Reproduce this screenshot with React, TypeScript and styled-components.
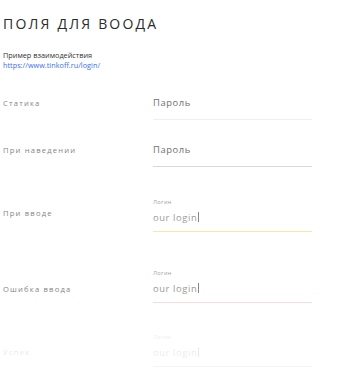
import React from "react";
import styled, { createGlobalStyle } from "styled-components";

const Global = createGlobalStyle`
  html, body { margin: 0; padding: 0; background: #fff; }
  body { font-family: "Open Sans", "Noto Sans", sans-serif; }
`;

const Page = styled.div`
  width: 342px;
  height: 392px;
  overflow: hidden;
  padding: 16px 0 0 3px;
  box-sizing: border-box;
`;

const Title = styled.h1`
  margin: 0;
  font-size: 14px;
  line-height: 16px;
  font-weight: 400;
  letter-spacing: 2.2px;
  color: #2b2b2b;
`;

const Caption = styled.div`
  margin-top: 19px;
  font-size: 7.3px;
  line-height: 9px;
  color: #333;
`;

const Link = styled.a`
  display: block;
  margin-top: 1px;
  font-size: 7.3px;
  line-height: 9px;
  color: #3a6ff2;
  text-decoration: none;
`;

const Rows = styled.div`
  display: flex;
  flex-direction: column;
`;

const Row = styled.div<{ $top: number; $faded?: boolean }>`
  display: grid;
  grid-template-columns: 150px 159px;
  align-items: end;
  margin-top: ${(p) => p.$top}px;
  opacity: ${(p) => (p.$faded ? 0.18 : 1)};
`;

const StateLabel = styled.div<{ $shift: number }>`
  font-size: 7.6px;
  line-height: 14px;
  letter-spacing: 1.2px;
  color: #858585;
  padding-bottom: ${(p) => p.$shift}px;
`;

const Field = styled.div<{ $line: string; $filled: boolean }>`
  display: flex;
  flex-direction: column;
  border-bottom: 1px solid ${(p) => p.$line};
  padding-bottom: ${(p) => (p.$filled ? 6 : 9)}px;
`;

const FloatLabel = styled.div`
  font-size: 5.6px;
  line-height: 8px;
  letter-spacing: 0.4px;
  color: #a0a0a0;
  margin-bottom: 5px;
`;

const Value = styled.div<{ $placeholder?: boolean }>`
  font-size: 9.4px;
  line-height: 14px;
  letter-spacing: 0.6px;
  color: ${(p) => (p.$placeholder ? "#707070" : "#9a9a9a")};
`;

const Caret = styled.span`
  display: inline-block;
  width: 1px;
  height: 10px;
  margin-left: 1px;
  vertical-align: -1px;
  background: #888;
`;

type RowData = {
  name: string;
  top: number;
  line: string;
  filled: boolean;
  shift: number;
  faded?: boolean;
};

const rows: RowData[] = [
  { name: "Статика", top: 26, line: "#f0f0f0", filled: false, shift: 10 },
  { name: "При наведении", top: 23, line: "#d9d9d9", filled: false, shift: 10 },
  { name: "При вводе", top: 31, line: "#fbe7a6", filled: true, shift: 12 },
  { name: "Ошибка ввода", top: 37, line: "#fadcdc", filled: true, shift: 7 },
  { name: "Успех", top: 30, line: "#cccccc", filled: true, shift: 8, faded: true },
];

export default function App() {
  return (
    <>
      <Global />
      <Page>
        <Title>ПОЛЯ ДЛЯ ВООДА</Title>
        <Caption>Пример взаимодействия</Caption>
        <Link href="#">https://www.tinkoff.ru/login/</Link>
        <Rows>
          {rows.map((r) => (
            <Row key={r.name} $top={r.top} $faded={r.faded}>
              <StateLabel $shift={r.shift}>{r.name}</StateLabel>
              <Field $line={r.line} $filled={r.filled}>
                {r.filled ? (
                  <>
                    <FloatLabel>Логин</FloatLabel>
                    <Value>
                      our login
                      <Caret />
                    </Value>
                  </>
                ) : (
                  <Value $placeholder>Пароль</Value>
                )}
              </Field>
            </Row>
          ))}
        </Rows>
      </Page>
    </>
  );
}
